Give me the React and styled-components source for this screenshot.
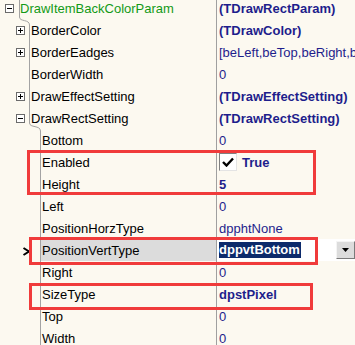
import styled, { createGlobalStyle } from 'styled-components';

const GlobalStyle = createGlobalStyle`
  html, body {
    margin: 0;
    padding: 0;
    background: #fcf9f0;
  }
  body {
    font-family: "Liberation Sans", Arial, sans-serif;
    font-size: 13px;
  }
`;

const ROWS = [
  { name: 'DrawItemBackColorParam', level: 0, exp: '-', value: '(TDrawRectParam)', bold: true, group: true },
  { name: 'BorderColor', level: 1, exp: '+', value: '(TDrawColor)', bold: true },
  { name: 'BorderEadges', level: 1, exp: '+', value: '[beLeft,beTop,beRight,beBottom]' },
  { name: 'BorderWidth', level: 1, value: '0' },
  { name: 'DrawEffectSetting', level: 1, exp: '+', value: '(TDrawEffectSetting)', bold: true },
  { name: 'DrawRectSetting', level: 1, exp: '-', value: '(TDrawRectSetting)', bold: true },
  { name: 'Bottom', level: 2, value: '0' },
  { name: 'Enabled', level: 2, value: 'True', bold: true, check: true },
  { name: 'Height', level: 2, value: '5', bold: true },
  { name: 'Left', level: 2, value: '0' },
  { name: 'PositionHorzType', level: 2, value: 'dpphtNone' },
  { name: 'PositionVertType', level: 2, value: 'dppvtBottom', bold: true, selected: true },
  { name: 'Right', level: 2, value: '0' },
  { name: 'SizeType', level: 2, value: 'dpstPixel', bold: true },
  { name: 'Top', level: 2, value: '0' },
  { name: 'Width', level: 2, value: '0' },
];

// red annotation frames drawn over the grid
const MARKS = [
  { left: 27, top: 150, width: 289, height: 45 },
  { left: 29, top: 237, width: 289, height: 28 },
  { left: 29, top: 283, width: 284, height: 27 },
];

export default function App() {
  return (
    <>
      <GlobalStyle />
      <Inspector>
        <List>
          {ROWS.map((row) => (
            <Row key={row.name}>
              <NameCell>
                <Indent level={row.level}>
                  {row.selected && <RowArrow />}
                  {row.exp && <Expander sign={row.exp} />}
                </Indent>
                <Label selected={row.selected} group={row.group}>
                  {row.name}
                </Label>
              </NameCell>
              <ValueCell>
                {row.selected ? (
                  <Editor>
                    <EditText>
                      <Selection>{row.value}</Selection>
                    </EditText>
                    <DropButton>
                      <svg width="7" height="4" viewBox="0 0 7 4">
                        <path d="M0 0h7L3.5 4z" fill="#000" />
                      </svg>
                    </DropButton>
                  </Editor>
                ) : (
                  <>
                    {row.check && <CheckBox />}
                    <Value bold={row.bold}>{row.value}</Value>
                  </>
                )}
              </ValueCell>
            </Row>
          ))}
        </List>
        <TreeLines width="216" height="345">
          <path
            d="M19.5 -3V17C19.5 22 29.5 19 29.5 25V123C29.5 128 40.5 125 40.5 131V345"
            fill="none"
            stroke="#a3a3a3"
          />
        </TreeLines>
        {MARKS.map((m, i) => (
          <Mark key={i} style={m} />
        ))}
      </Inspector>
    </>
  );
}

function Expander({ sign }) {
  return (
    <ExpBox>
      <svg width="9" height="9" viewBox="0 0 9 9">
        <rect x="0.5" y="0.5" width="8" height="8" fill="#fff" stroke="#6b6b6b" />
        <path d="M2 4.5h5" stroke="#000" />
        {sign === '+' && <path d="M4.5 2v5" stroke="#000" />}
      </svg>
    </ExpBox>
  );
}

function RowArrow() {
  return (
    <ArrowMark>
      <svg width="9" height="9" viewBox="0 0 9 9">
        <path d="M1.5 1l5.5 3.5L1.5 8" fill="none" stroke="#000" strokeWidth="2" />
      </svg>
    </ArrowMark>
  );
}

function CheckBox() {
  return (
    <CheckFrame>
      <svg width="12" height="10" viewBox="0 0 12 10">
        <path d="M1 5l3.5 3.5L11 1.5" fill="none" stroke="#000" strokeWidth="2.4" />
      </svg>
    </CheckFrame>
  );
}

const Inspector = styled.div`
  position: relative;
  width: 355px;
  height: 345px;
  overflow: hidden;
  background: #fcf9f0;
`;

const List = styled.div`
  display: flex;
  flex-direction: column;
  margin-top: -3px;
`;

const Row = styled.div`
  display: grid;
  grid-template-columns: 216px 1fr;
  height: 22px;
`;

const NameCell = styled.div`
  display: flex;
  align-items: stretch;
  min-width: 0;
`;

const Indent = styled.div`
  flex: 0 0 ${(p) => 18 + p.level * 11}px;
  display: flex;
  align-items: center;
  justify-content: flex-end;
  padding-right: 4px;
  box-sizing: border-box;
`;

const ExpBox = styled.span`
  display: flex;
  width: 9px;
  height: 9px;
  margin-top: 1px;
`;

const ArrowMark = styled.span`
  display: flex;
  width: 9px;
  height: 9px;
  margin-right: 5px;
  margin-top: 3px;
`;

const Label = styled.div`
  flex: 1;
  display: flex;
  align-items: center;
  padding-left: 2px;
  white-space: nowrap;
  overflow: hidden;
  color: ${(p) => (p.group ? '#139a17' : '#000')};
  background: ${(p) => (p.selected ? '#dcdcdc' : 'transparent')};
`;

const ValueCell = styled.div`
  display: flex;
  align-items: center;
  border-left: 1px solid #a0a0a0;
  padding-left: 2px;
  white-space: nowrap;
  overflow: hidden;
  min-width: 0;
`;

const Value = styled.span`
  color: #1e1e8c;
  font-weight: ${(p) => (p.bold ? 700 : 400)};
`;

const CheckFrame = styled.span`
  display: flex;
  align-items: center;
  justify-content: center;
  width: 18px;
  height: 18px;
  box-sizing: border-box;
  margin-right: 5px;
  background: #fff;
  border-top: 1px solid #808080;
  border-left: 1px solid #808080;
  border-right: 1px solid #e4e4e4;
  border-bottom: 1px solid #e4e4e4;
`;

const Editor = styled.div`
  flex: 1;
  display: flex;
  align-items: center;
  height: 100%;
  margin-left: -2px;
  background: #fff;
`;

const EditText = styled.div`
  flex: 1;
  display: flex;
  align-items: center;
  padding-left: 2px;
`;

const Selection = styled.span`
  background: #0c2a6b;
  color: #fff;
  font-weight: 700;
  line-height: 16px;
  padding-right: 1px;
`;

const DropButton = styled.div`
  display: flex;
  align-items: center;
  justify-content: center;
  width: 19px;
  height: 18px;
  box-sizing: border-box;
  background: #dcdcdc;
  border-top: 1px solid #f4f4f4;
  border-left: 1px solid #f4f4f4;
  border-right: 1px solid #7a7a7a;
  border-bottom: 1px solid #7a7a7a;
`;

const TreeLines = styled.svg`
  position: absolute;
  left: 0;
  top: 0;
  pointer-events: none;
`;

const Mark = styled.div`
  position: absolute;
  box-sizing: border-box;
  border: 3px solid #f03b3b;
  pointer-events: none;
`;
